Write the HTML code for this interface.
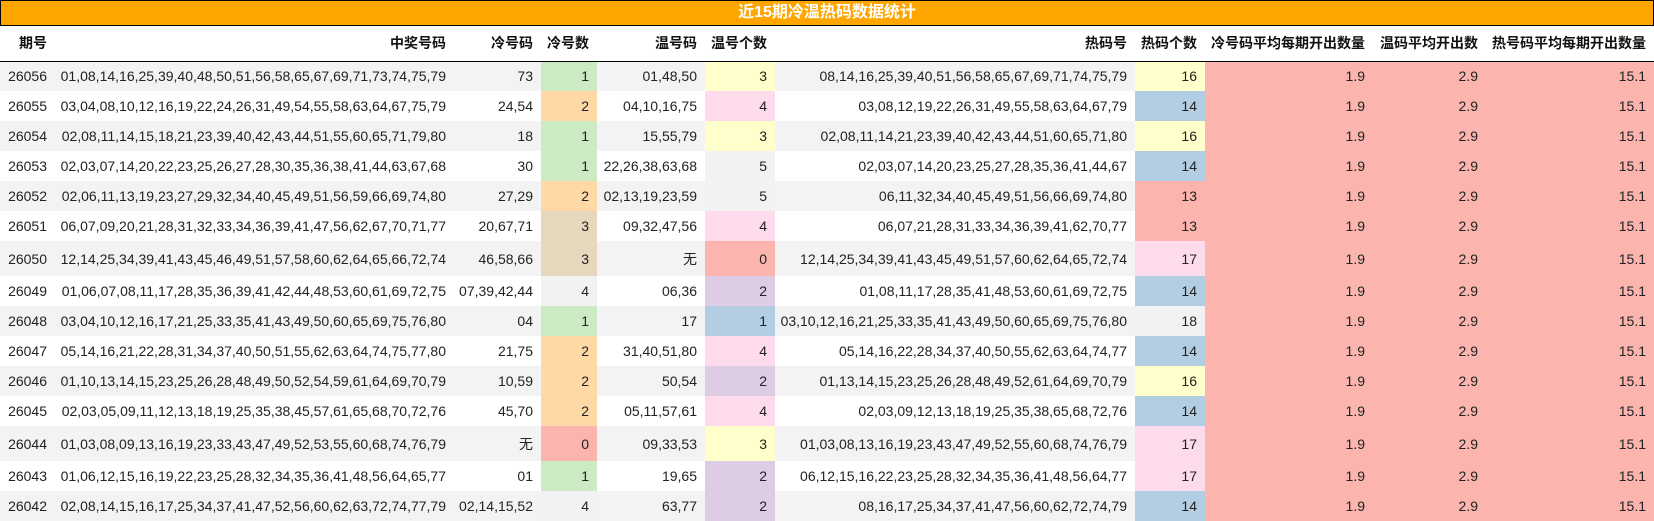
<!DOCTYPE html>
<html><head><meta charset="utf-8"><style>
*{margin:0;padding:0;box-sizing:border-box}
body{width:1654px;height:521px;background:#fff;font-family:"Liberation Sans","Noto Sans CJK SC",sans-serif;font-size:14px;color:#222;overflow:hidden}
.title{height:26px;background:#FFA500;border:1px solid #000;color:#fff;font-weight:bold;font-size:16px;text-align:center;line-height:24px}
table{border-collapse:collapse;table-layout:fixed;width:1654px}
td,th{text-align:right;padding:0 8px 0 0;white-space:nowrap;overflow:hidden}
th{height:35px;font-weight:bold;color:#111;border-bottom:1px solid #000;font-size:14px}
tr.r td{height:30px}
tr.t td{height:35px}
tr:nth-child(even) td{background:#f3f3f3}
td.b2{padding-right:5px}
tr td.g{background:#ccebc5}
tr td.o{background:#fed9a6}
tr td.n{background:#e5d8bd}
tr td.y{background:#ffffcc}
tr td.p{background:#fddaec}
tr td.r{background:#fbb4ae}
tr td.u{background:#decbe4}
tr td.bl{background:#b3cde3}
tr td.gr{background:#f2f2f2}
</style></head><body>
<div class="title">近15期冷温热码数据统计</div>
<table>
<colgroup><col style="width:55px"><col style="width:396px"><col style="width:90px"><col style="width:56px"><col style="width:108px"><col style="width:70px"><col style="width:360px"><col style="width:70px"><col style="width:168px"><col style="width:113px"><col style="width:168px"></colgroup>
<tr><th>期号</th><th style="padding-right:5px">中奖号码</th><th>冷号码</th><th>冷号数</th><th>温号码</th><th>温号个数</th><th>热码号</th><th>热码个数</th><th>冷号码平均每期开出数量</th><th>温码平均开出数</th><th>热号码平均每期开出数量</th></tr>
<tr class="r"><td>26056</td><td class="b2">01,08,14,16,25,39,40,48,50,51,56,58,65,67,69,71,73,74,75,79</td><td>73</td><td class="g">1</td><td>01,48,50</td><td class="y">3</td><td>08,14,16,25,39,40,51,56,58,65,67,69,71,74,75,79</td><td class="y">16</td><td class="r">1.9</td><td class="r">2.9</td><td class="r">15.1</td></tr>
<tr class="r"><td>26055</td><td class="b2">03,04,08,10,12,16,19,22,24,26,31,49,54,55,58,63,64,67,75,79</td><td>24,54</td><td class="o">2</td><td>04,10,16,75</td><td class="p">4</td><td>03,08,12,19,22,26,31,49,55,58,63,64,67,79</td><td class="bl">14</td><td class="r">1.9</td><td class="r">2.9</td><td class="r">15.1</td></tr>
<tr class="r"><td>26054</td><td class="b2">02,08,11,14,15,18,21,23,39,40,42,43,44,51,55,60,65,71,79,80</td><td>18</td><td class="g">1</td><td>15,55,79</td><td class="y">3</td><td>02,08,11,14,21,23,39,40,42,43,44,51,60,65,71,80</td><td class="y">16</td><td class="r">1.9</td><td class="r">2.9</td><td class="r">15.1</td></tr>
<tr class="r"><td>26053</td><td class="b2">02,03,07,14,20,22,23,25,26,27,28,30,35,36,38,41,44,63,67,68</td><td>30</td><td class="g">1</td><td>22,26,38,63,68</td><td class="gr">5</td><td>02,03,07,14,20,23,25,27,28,35,36,41,44,67</td><td class="bl">14</td><td class="r">1.9</td><td class="r">2.9</td><td class="r">15.1</td></tr>
<tr class="r"><td>26052</td><td class="b2">02,06,11,13,19,23,27,29,32,34,40,45,49,51,56,59,66,69,74,80</td><td>27,29</td><td class="o">2</td><td>02,13,19,23,59</td><td class="gr">5</td><td>06,11,32,34,40,45,49,51,56,66,69,74,80</td><td class="r">13</td><td class="r">1.9</td><td class="r">2.9</td><td class="r">15.1</td></tr>
<tr class="r"><td>26051</td><td class="b2">06,07,09,20,21,28,31,32,33,34,36,39,41,47,56,62,67,70,71,77</td><td>20,67,71</td><td class="n">3</td><td>09,32,47,56</td><td class="p">4</td><td>06,07,21,28,31,33,34,36,39,41,62,70,77</td><td class="r">13</td><td class="r">1.9</td><td class="r">2.9</td><td class="r">15.1</td></tr>
<tr class="t"><td>26050</td><td class="b2">12,14,25,34,39,41,43,45,46,49,51,57,58,60,62,64,65,66,72,74</td><td>46,58,66</td><td class="n">3</td><td>无</td><td class="r">0</td><td>12,14,25,34,39,41,43,45,49,51,57,60,62,64,65,72,74</td><td class="p">17</td><td class="r">1.9</td><td class="r">2.9</td><td class="r">15.1</td></tr>
<tr class="r"><td>26049</td><td class="b2">01,06,07,08,11,17,28,35,36,39,41,42,44,48,53,60,61,69,72,75</td><td>07,39,42,44</td><td class="gr">4</td><td>06,36</td><td class="u">2</td><td>01,08,11,17,28,35,41,48,53,60,61,69,72,75</td><td class="bl">14</td><td class="r">1.9</td><td class="r">2.9</td><td class="r">15.1</td></tr>
<tr class="r"><td>26048</td><td class="b2">03,04,10,12,16,17,21,25,33,35,41,43,49,50,60,65,69,75,76,80</td><td>04</td><td class="g">1</td><td>17</td><td class="bl">1</td><td>03,10,12,16,21,25,33,35,41,43,49,50,60,65,69,75,76,80</td><td class="gr">18</td><td class="r">1.9</td><td class="r">2.9</td><td class="r">15.1</td></tr>
<tr class="r"><td>26047</td><td class="b2">05,14,16,21,22,28,31,34,37,40,50,51,55,62,63,64,74,75,77,80</td><td>21,75</td><td class="o">2</td><td>31,40,51,80</td><td class="p">4</td><td>05,14,16,22,28,34,37,40,50,55,62,63,64,74,77</td><td class="bl">14</td><td class="r">1.9</td><td class="r">2.9</td><td class="r">15.1</td></tr>
<tr class="r"><td>26046</td><td class="b2">01,10,13,14,15,23,25,26,28,48,49,50,52,54,59,61,64,69,70,79</td><td>10,59</td><td class="o">2</td><td>50,54</td><td class="u">2</td><td>01,13,14,15,23,25,26,28,48,49,52,61,64,69,70,79</td><td class="y">16</td><td class="r">1.9</td><td class="r">2.9</td><td class="r">15.1</td></tr>
<tr class="r"><td>26045</td><td class="b2">02,03,05,09,11,12,13,18,19,25,35,38,45,57,61,65,68,70,72,76</td><td>45,70</td><td class="o">2</td><td>05,11,57,61</td><td class="p">4</td><td>02,03,09,12,13,18,19,25,35,38,65,68,72,76</td><td class="bl">14</td><td class="r">1.9</td><td class="r">2.9</td><td class="r">15.1</td></tr>
<tr class="t"><td>26044</td><td class="b2">01,03,08,09,13,16,19,23,33,43,47,49,52,53,55,60,68,74,76,79</td><td>无</td><td class="r">0</td><td>09,33,53</td><td class="y">3</td><td>01,03,08,13,16,19,23,43,47,49,52,55,60,68,74,76,79</td><td class="p">17</td><td class="r">1.9</td><td class="r">2.9</td><td class="r">15.1</td></tr>
<tr class="r"><td>26043</td><td class="b2">01,06,12,15,16,19,22,23,25,28,32,34,35,36,41,48,56,64,65,77</td><td>01</td><td class="g">1</td><td>19,65</td><td class="u">2</td><td>06,12,15,16,22,23,25,28,32,34,35,36,41,48,56,64,77</td><td class="p">17</td><td class="r">1.9</td><td class="r">2.9</td><td class="r">15.1</td></tr>
<tr class="r"><td>26042</td><td class="b2">02,08,14,15,16,17,25,34,37,41,47,52,56,60,62,63,72,74,77,79</td><td>02,14,15,52</td><td class="gr">4</td><td>63,77</td><td class="u">2</td><td>08,16,17,25,34,37,41,47,56,60,62,72,74,79</td><td class="bl">14</td><td class="r">1.9</td><td class="r">2.9</td><td class="r">15.1</td></tr>
</table>
</body></html>
